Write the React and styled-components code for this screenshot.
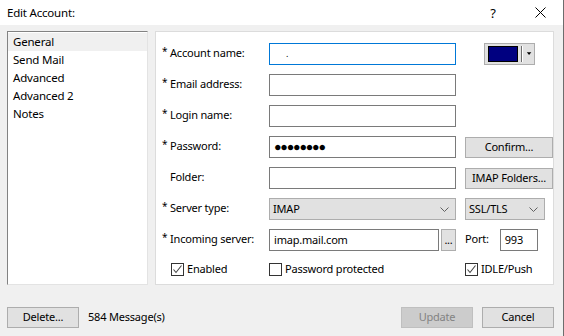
import React from 'react'
import styled, { createGlobalStyle } from 'styled-components'

const GlobalStyle = createGlobalStyle`
  html, body {
    margin: 0;
    padding: 0;
    background: #f0f0f0;
  }
  body {
    font-family: "Segoe UI", "Noto Sans", "Liberation Sans", sans-serif;
    font-size: 11px;
    letter-spacing: -0.2px;
    color: #000;
  }
`

const Window = styled.div`
  width: 564px;
  height: 336px;
  display: flex;
  flex-direction: column;
  background: #f0f0f0;
  box-sizing: border-box;
  border-right: 1px solid #6d6d6d;
  overflow: hidden;
`

const TitleBar = styled.div`
  height: 25px;
  background: #fff;
  display: flex;
  align-items: center;
  padding-left: 7px;
  font-size: 11.5px;
`

const Title = styled.span`
  flex: 1;
`

const TitleControl = styled.span`
  width: ${p => p.$w}px;
  display: flex;
  justify-content: center;
  align-items: center;
  font-size: 13px;
`

const Body = styled.div`
  display: flex;
  gap: 7px;
  padding: 6px 9px 0 7px;
`

const NavList = styled.ul`
  list-style: none;
  margin: 0;
  padding: 1px 0 0;
  width: 142px;
  height: 254px;
  box-sizing: border-box;
  background: #fff;
  border: 1px solid;
  border-color: #828282 #e3e3e3 #e3e3e3 #828282;
  font-size: 11.5px;
`

const NavItem = styled.li`
  height: 18px;
  line-height: 17px;
  padding-left: 5px;
  background: ${p => (p.$active ? '#f0f0f0' : 'transparent')};
`

const Panel = styled.div`
  flex: 1;
  height: 254px;
  box-sizing: border-box;
  background: #fff;
  border: 1px solid #dcdcdc;
  padding: 11px 0 0 6px;
`

const Form = styled.div`
  display: grid;
  grid-template-columns: 107px 196px 88px;
  grid-auto-rows: 22px;
  row-gap: 9px;
  align-items: center;
`

const Label = styled.div`
  display: flex;
  align-items: center;
  white-space: nowrap;
  position: relative;
  top: -2px;
`

const Star = styled.span`
  width: 8px;
  font-size: 10px;
  position: relative;
  top: -1px;
`

const Input = styled.div`
  width: ${p => p.$w || 187}px;
  height: 22px;
  box-sizing: border-box;
  background: #fff;
  border: 1px solid ${p => (p.$focus ? '#0078d7' : '#7a7a7a')};
  padding: 0 0 2px 4px;
  display: flex;
  align-items: center;
  font-size: ${p => (p.$dots ? '12.5px' : '11px')};
  letter-spacing: ${p => (p.$dots ? '-1.2px' : '-0.2px')};
`

const Select = styled.div`
  width: ${p => p.$w}px;
  height: 22px;
  box-sizing: border-box;
  background: #e1e1e1;
  border: 1px solid #adadad;
  padding: 0 6px 2px 3px;
  display: flex;
  align-items: center;
  justify-content: space-between;
`

const Button = styled.div`
  width: ${p => p.$w || 88}px;
  height: ${p => p.$h || 21}px;
  box-sizing: border-box;
  background: ${p => (p.$disabled ? '#cccccc' : '#e1e1e1')};
  border: 1px solid ${p => (p.$disabled ? '#bfbfbf' : '#adadad')};
  color: ${p => (p.$disabled ? '#838383' : '#000')};
  padding-bottom: 2px;
  display: flex;
  align-items: center;
  justify-content: center;
  white-space: nowrap;
`

const Cell = styled.div`
  display: flex;
  align-items: center;
  justify-content: ${p => p.$justify || 'flex-start'};
  gap: ${p => p.$gap || 0}px;
`

const PortLabel = styled.span`
  position: relative;
  top: -2px;
`

const ColorButton = styled.div`
  width: 51px;
  height: 22px;
  box-sizing: border-box;
  background: #e1e1e1;
  border: 1px solid #adadad;
  display: flex;
  align-items: center;
  padding-left: 3px;
`

const Swatch = styled.div`
  width: 34px;
  height: 16px;
  box-sizing: border-box;
  background: #000080;
  border: 1px solid #000;
`

const Divider = styled.div`
  width: 1px;
  height: 16px;
  margin-left: 3px;
  background: #6d6d6d;
  box-shadow: 1px 0 0 #fff;
`

const Check = styled.label`
  display: flex;
  align-items: center;
  gap: 3px;
  padding-left: ${p => p.$pad || 0}px;
  white-space: nowrap;
  position: relative;
  top: -2px;
`

const CheckText = styled.span`
  position: relative;
  top: -1px;
`

const Box = styled.span`
  width: 13px;
  height: 13px;
  box-sizing: border-box;
  border: 1px solid #333;
  background: #fff;
  display: flex;
  align-items: center;
  justify-content: center;
`

const Footer = styled.div`
  display: flex;
  align-items: center;
  padding: 22px 9px 0 7px;
  gap: 9px;
`

const Count = styled.span`
  flex: 1;
  position: relative;
  top: -1px;
`

const Chevron = () => (
  <svg width="9" height="5" viewBox="0 0 9 5" style={{ marginTop: 2 }}>
    <polyline points="0.5,0.5 4.5,4.5 8.5,0.5" fill="none" stroke="#606060" strokeWidth="1" />
  </svg>
)

const Tick = () => (
  <svg width="11" height="11" viewBox="0 0 11 11">
    <polyline points="1.5,5.5 4,8.5 9.5,1.5" fill="none" stroke="#444" strokeWidth="1.1" />
  </svg>
)

const CheckBox = ({ checked, children, pad }) => (
  <Check $pad={pad}>
    <Box>{checked && <Tick />}</Box>
    <CheckText>{children}</CheckText>
  </Check>
)

const FieldLabel = ({ req = true, children }) => (
  <Label>
    <Star>{req ? '*' : ''}</Star>
    {children}
  </Label>
)

export default function App() {
  return (
    <Window>
      <GlobalStyle />
      <TitleBar>
        <Title>Edit Account:</Title>
        <TitleControl $w={48}>?</TitleControl>
        <TitleControl $w={46}>
          <svg width="11" height="11" viewBox="0 0 11 11">
            <path d="M0.5 0.5 L10.5 10.5 M10.5 0.5 L0.5 10.5" stroke="#000" strokeWidth="1" />
          </svg>
        </TitleControl>
      </TitleBar>

      <Body>
        <NavList>
          <NavItem $active>General</NavItem>
          <NavItem>Send Mail</NavItem>
          <NavItem>Advanced</NavItem>
          <NavItem>Advanced 2</NavItem>
          <NavItem>Notes</NavItem>
        </NavList>

        <Panel>
          <Form>
            <FieldLabel>Account name:</FieldLabel>
            <Input $focus>
              <span style={{ paddingLeft: 12, fontSize: 9 }}>.</span>
            </Input>
            <Cell $justify="center">
              <ColorButton>
                <Swatch />
                <Divider />
                <svg width="9" height="4" viewBox="0 0 9 4" style={{ marginLeft: 3 }}>
                  <polygon points="2,0 7,0 4.5,3" fill="#000" />
                </svg>
              </ColorButton>
            </Cell>

            <FieldLabel>Email address:</FieldLabel>
            <Input />
            <div />

            <FieldLabel>Login name:</FieldLabel>
            <Input />
            <div />

            <FieldLabel>Password:</FieldLabel>
            <Input $dots>●●●●●●●●</Input>
            <Button>Confirm...</Button>

            <FieldLabel req={false}>Folder:</FieldLabel>
            <Input />
            <Button>IMAP Folders...</Button>

            <FieldLabel>Server type:</FieldLabel>
            <Select $w={187}>
              IMAP
              <Chevron />
            </Select>
            <Select $w={80}>
              SSL/TLS
              <Chevron />
            </Select>

            <FieldLabel>Incoming server:</FieldLabel>
            <Cell $gap={2}>
              <Input $w={170}>imap.mail.com</Input>
              <Button $w={15} $h={22}>...</Button>
            </Cell>
            <Cell $gap={11}>
              <PortLabel>Port:</PortLabel>
              <Input $w={38}>993</Input>
            </Cell>

            <CheckBox checked pad={9}>Enabled</CheckBox>
            <CheckBox>Password protected</CheckBox>
            <CheckBox checked pad={0}>IDLE/Push</CheckBox>
          </Form>
        </Panel>
      </Body>

      <Footer>
        <Button $w={72}>Delete...</Button>
        <Count>584 Message(s)</Count>
        <Button $w={72} $disabled>Update</Button>
        <Button $w={72}>Cancel</Button>
      </Footer>
    </Window>
  )
}
